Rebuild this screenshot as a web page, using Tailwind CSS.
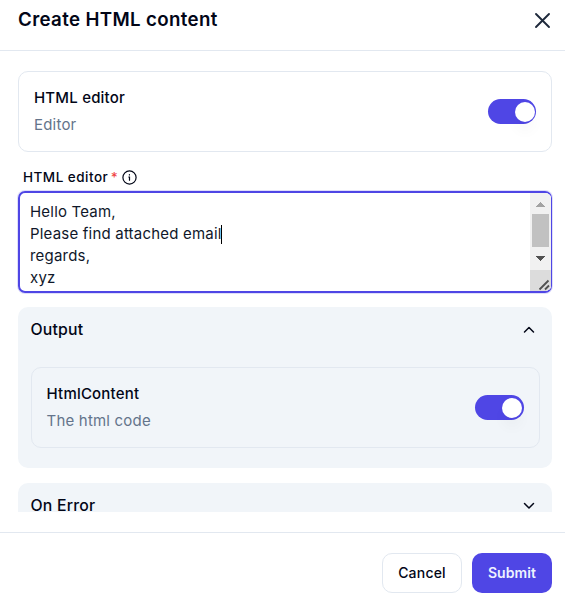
<!DOCTYPE html>
<html lang="en">
<head>
<meta charset="utf-8">
<title>Create HTML content</title>
<script src="https://cdn.jsdelivr.net/npm/@tailwindcss/browser@4"></script>
</head>
<body class="h-[595px] w-[565px] overflow-hidden bg-white font-['Inter',sans-serif] text-[15px] tracking-[0.2px] text-[#020617]">
<div class="flex h-full flex-col">
  <header class="flex h-[51px] shrink-0 items-start justify-between border-b border-[#e2e8f0] pr-[14px] pl-[18px]">
    <h1 class="pt-[7px] text-[18.7px] leading-[26px] font-semibold tracking-[0.36px]">Create HTML content</h1>
    <button aria-label="Close" class="mt-[12px]">
      <svg class="block size-[17px]" viewBox="0 0 17 17" fill="none" stroke="#1e293b" stroke-width="1.9" stroke-linecap="round"><path d="M2 2l13 13M15 2L2 15"/></svg>
    </button>
  </header>

  <main class="h-[461px] shrink-0 overflow-hidden px-[18px] pt-5 pr-[13px]">
    <section class="flex h-[81px] w-[534px] items-center justify-between rounded-[10px] border border-[#e2e8f0] pr-[15px] pl-[15px]">
      <div class="pb-[2px]">
        <p class="leading-[27px] font-medium">HTML editor</p>
        <p class="leading-[27px] text-[#64748b]">Editor</p>
      </div>
      <div role="switch" aria-checked="true" class="flex h-[25px] w-12 items-center justify-end rounded-full bg-[#4f46e5] pr-px">
        <span class="size-5 rounded-full bg-white shadow-[0_10px_15px_-3px_rgba(0,0,0,0.06)]"></span>
      </div>
    </section>

    <label class="mt-4 flex h-[18px] items-center pl-[5px] text-[13.5px] leading-[18px] font-medium tracking-[0.48px]">HTML editor<span class="ml-[2.5px] text-[#ef4444]">*</span>
      <svg class="ml-[4px] size-[15px]" viewBox="0 0 15 15" fill="none" stroke="#020617" stroke-width="1.2" stroke-linecap="round"><circle cx="7.5" cy="7.5" r="6.6"/><path d="M6.800 7h.7v3.200"/><path d="M7.400 4.700v.2"/></svg>
    </label>

    <div class="mt-[5px] flex h-[102px] w-[534px] overflow-hidden rounded-[7px] border-2 border-r border-[#4f46e5] shadow-[0_0_0_1px_rgba(79,70,229,0.18)]">
      <div class="flex-1 pt-2 pl-[10px] leading-[22px] text-[#0f172a]">
        <p>Hello Team,</p>
        <p class="flex items-center">Please find attached email<span class="-ml-px h-[19px] w-px bg-black"></span></p>
        <p>regards,</p>
        <p>xyz</p>
      </div>
      <div class="flex w-[21px] flex-col bg-[#f1f1f1]">
        <svg class="h-[77px] w-[21px]" viewBox="0 0 21 77" shape-rendering="crispEdges"><path d="M6 14l4.5-5 4.5 5z" fill="#a3a3a3"/><path d="M2 21h17v33H2z" fill="#c1c1c1"/><path d="M6 63h9l-4.500 5z" fill="#505050"/></svg>
        <svg class="h-[21px] w-[21px] bg-[#dcdcdc]" viewBox="0 0 21 21" stroke="#505050" stroke-width="1.8"><path d="M9.500 19.500L18.500 10.500M15 19.500l4-4"/></svg>
      </div>
    </div>

    <section class="mt-[14px] h-[161px] w-[534px] rounded-[10px] bg-[#f1f5f9] pt-[9px] pr-3 pl-[13px]">
      <div class="-ml-[0.5px] flex h-[27px] items-center justify-between pr-[5px]">
        <h2 class="text-[15.8px] font-medium">Output</h2>
        <svg class="size-3" viewBox="0 0 12 12" fill="none" stroke="#020617" stroke-width="1.5" stroke-linecap="round" stroke-linejoin="round"><path d="M1.500 8L6 3.500l4.500 4.500"/></svg>
      </div>
      <div class="mt-6 flex h-[81px] items-center justify-between rounded-[10px] border border-[#e2e8f0] pr-[15px] pl-[14.5px]">
        <div class="pb-[2px]">
          <p class="leading-[27px] font-medium">HtmlContent</p>
          <p class="leading-[27px] text-[#64748b]">The html code</p>
        </div>
        <div role="switch" aria-checked="true" class="flex h-[25px] w-[49px] items-center justify-end rounded-full bg-[#4f46e5] pr-[2px]">
          <span class="size-5 rounded-full bg-white shadow-[0_10px_15px_-3px_rgba(0,0,0,0.06)]"></span>
        </div>
      </div>
    </section>

    <section class="mt-[15px] h-[50px] w-[534px] rounded-[10px] bg-[#f1f5f9] pt-[9px] pr-3 pl-[13px]">
      <div class="-ml-[0.5px] flex h-[27px] items-center justify-between pr-[5px]">
        <h2 class="text-[15.8px] font-medium">On Error</h2>
        <svg class="size-3" viewBox="0 0 12 12" fill="none" stroke="#020617" stroke-width="1.5" stroke-linecap="round" stroke-linejoin="round"><path d="M1.500 3.500L6 8l4.500-4.500"/></svg>
      </div>
    </section>
  </main>

  <footer class="mt-5 flex shrink-0 justify-end gap-[10px] border-t border-[#e2e8f0] pt-5 pr-[13px] text-[14px] font-medium">
    <button class="h-10 w-20 rounded-[10px] border border-[#e2e8f0] pb-px">Cancel</button>
    <button class="h-10 w-20 rounded-[10px] bg-[#4f46e5] pb-[2px] font-semibold tracking-[0.1px] text-[#eef2ff]">Submit</button>
  </footer>
</div>
</body>
</html>
